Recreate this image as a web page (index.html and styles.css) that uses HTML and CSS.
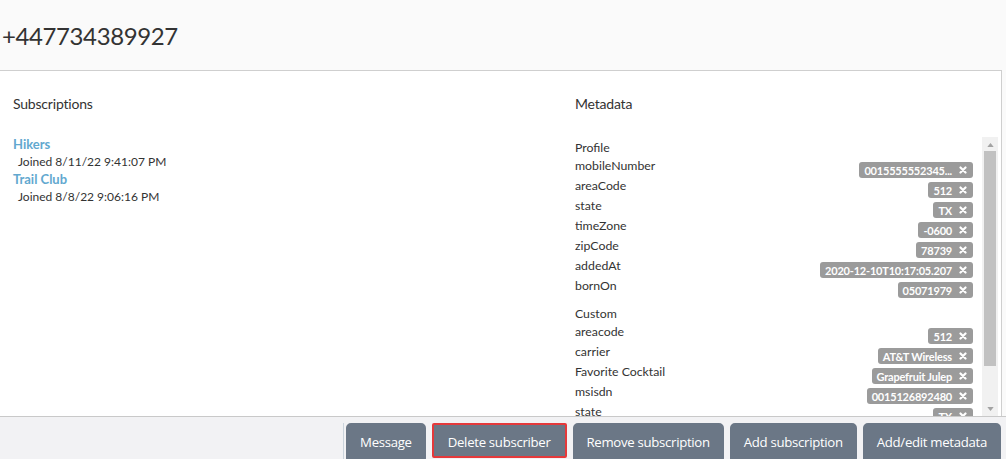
FILE: index.html
```html
<!DOCTYPE html>
<html>
<head>
<meta charset="utf-8">
<link rel="stylesheet" href="styles.css">
</head>
<body>
<div class="header"><h1 class="phone">+447734389927</h1></div>
<div class="panel">
  <section class="subs">
    <h2 class="heading">Subscriptions</h2>
    <ul class="sub-list">
      <li><a class="sub-name">Hikers</a><div class="joined">Joined 8/11/22 9:41:07 PM</div></li>
      <li><a class="sub-name">Trail Club</a><div class="joined">Joined 8/8/22 9:06:16 PM</div></li>
    </ul>
  </section>
  <section class="meta">
    <h2 class="heading">Metadata</h2>
    <div class="meta-scroll">
      <div class="meta-list">
        <div class="group-title">Profile</div>
        <div class="row"><span class="key">mobileNumber</span><span class="badge">0015555552345...<svg class="x" viewBox="0 0 8 8"><path d="M1.5 1.5L6.5 6.5M6.5 1.5L1.5 6.5"/></svg></span></div>
        <div class="row"><span class="key">areaCode</span><span class="badge">512<svg class="x" viewBox="0 0 8 8"><path d="M1.5 1.5L6.5 6.5M6.5 1.5L1.5 6.5"/></svg></span></div>
        <div class="row"><span class="key">state</span><span class="badge">TX<svg class="x" viewBox="0 0 8 8"><path d="M1.5 1.5L6.5 6.5M6.5 1.5L1.5 6.5"/></svg></span></div>
        <div class="row"><span class="key">timeZone</span><span class="badge">-0600<svg class="x" viewBox="0 0 8 8"><path d="M1.5 1.5L6.5 6.5M6.5 1.5L1.5 6.5"/></svg></span></div>
        <div class="row"><span class="key">zipCode</span><span class="badge">78739<svg class="x" viewBox="0 0 8 8"><path d="M1.5 1.5L6.5 6.5M6.5 1.5L1.5 6.5"/></svg></span></div>
        <div class="row"><span class="key">addedAt</span><span class="badge">2020-12-10T10:17:05.207<svg class="x" viewBox="0 0 8 8"><path d="M1.5 1.5L6.5 6.5M6.5 1.5L1.5 6.5"/></svg></span></div>
        <div class="row"><span class="key">bornOn</span><span class="badge">05071979<svg class="x" viewBox="0 0 8 8"><path d="M1.5 1.5L6.5 6.5M6.5 1.5L1.5 6.5"/></svg></span></div>
        <div class="group-title group-gap">Custom</div>
        <div class="row"><span class="key">areacode</span><span class="badge">512<svg class="x" viewBox="0 0 8 8"><path d="M1.5 1.5L6.5 6.5M6.5 1.5L1.5 6.5"/></svg></span></div>
        <div class="row"><span class="key">carrier</span><span class="badge">AT&amp;T Wireless<svg class="x" viewBox="0 0 8 8"><path d="M1.5 1.5L6.5 6.5M6.5 1.5L1.5 6.5"/></svg></span></div>
        <div class="row"><span class="key">Favorite Cocktail</span><span class="badge">Grapefruit Julep<svg class="x" viewBox="0 0 8 8"><path d="M1.5 1.5L6.5 6.5M6.5 1.5L1.5 6.5"/></svg></span></div>
        <div class="row"><span class="key">msisdn</span><span class="badge">0015126892480<svg class="x" viewBox="0 0 8 8"><path d="M1.5 1.5L6.5 6.5M6.5 1.5L1.5 6.5"/></svg></span></div>
        <div class="row"><span class="key">state</span><span class="badge">TX<svg class="x" viewBox="0 0 8 8"><path d="M1.5 1.5L6.5 6.5M6.5 1.5L1.5 6.5"/></svg></span></div>
      </div>
      <div class="scrollbar">
        <svg class="arrow" viewBox="0 0 8 5"><path d="M0 5L4 0L8 5Z"/></svg>
        <div class="thumb-track"><div class="thumb"></div></div>
        <svg class="arrow" viewBox="0 0 8 5"><path d="M0 0L4 5L8 0Z"/></svg>
      </div>
    </div>
  </section>
</div>
<div class="toolbar">
  <div class="actions">
    <button class="btn">Message</button>
    <button class="btn btn-focus">Delete subscriber</button>
    <button class="btn">Remove subscription</button>
    <button class="btn">Add subscription</button>
    <button class="btn">Add/edit metadata</button>
  </div>
</div>
</body>
</html>
```
FILE: styles.css
```css
* { box-sizing: border-box; }
html, body { margin: 0; padding: 0; }
body {
  width: 1006px;
  height: 459px;
  overflow: hidden;
  background: #fafafa;
  font-family: "Lato", "Liberation Sans", sans-serif;
  color: #333;
}
.header {
  height: 70px;
  padding: 21px 0 0 2px;
}
.phone {
  margin: 0;
  font-size: 24px;
  font-weight: 400;
  line-height: 30px;
  color: #333;
  letter-spacing: -0.4px;
}
.panel {
  width: 1002px;
  height: 346px;
  background: #fff;
  border-top: 1px solid #cfcfcf;
  border-right: 1px solid #cfcfcf;
  display: grid;
  grid-template-columns: 575px 1fr;
  overflow: hidden;
}
.heading {
  margin: 0;
  font-size: 14px;
  font-weight: 400;
  line-height: 18px;
  color: #333;
  letter-spacing: -0.2px;
}
.subs { padding: 24px 13px 0; }
.sub-list { list-style: none; margin: 22px 0 0; padding: 0; }
.sub-name {
  display: block;
  font-size: 13px;
  font-weight: 700;
  color: #62a8cf;
  line-height: 19px;
}
.joined {
  font-size: 12px;
  line-height: 16px;
  padding-left: 5px;
  color: #333;
}
.meta { padding: 24px 0 0 0; }
.meta-scroll {
  display: flex;
  margin-top: 24px;
  height: 279px;
  overflow: hidden;
}
.meta-list { flex: 1; padding: 0 9px 0 0; }
.group-title {
  font-size: 12.3px;
  line-height: 20px;
  height: 20px;
  padding-top: 1px;
}
.group-gap { margin-top: 6px; }
.row {
  display: flex;
  justify-content: space-between;
  height: 20px;
}
.key {
  font-size: 12.3px;
  line-height: 18px;
  align-self: flex-start;
}
.badge {
  align-self: flex-end;
  margin-bottom: -1px;
  display: inline-flex;
  align-items: center;
  gap: 7px;
  height: 16px;
  padding: 0 6px 0 5px;
  background: #9b9b9b;
  color: #fff;
  font-size: 11px;
  font-weight: 700;
  border-radius: 3px;
  letter-spacing: -0.2px;
}
.x { width: 8px; height: 8px; }
.x path { stroke: #fff; stroke-width: 2.2; stroke-linecap: round; fill: none; }
.scrollbar {
  width: 16px;
  margin-right: 3px;
  background: #f1f1f1;
  display: flex;
  flex-direction: column;
  align-items: center;
  padding: 6px 0 5px;
}
.arrow { width: 7px; height: 4px; fill: #a3a3a3; }
.thumb-track { flex: 1; width: 100%; padding: 4px 2px 0; }
.thumb { height: 215px; background: #c1c1c1; }
.toolbar {
  height: 43px;
  background: #f2f2f4;
  border-top: 1px solid #c9c9c9;
  display: flex;
  justify-content: flex-end;
  padding: 6px 5px 0 0;
}
.actions {
  display: flex;
  gap: 6px;
  align-items: flex-start;
  border-left: 1px solid #cbd4dc;
  padding-left: 2px;
}
.btn {
  font-family: "Open Sans", sans-serif;
  font-size: 13.2px;
  line-height: 20px;
  color: #fff;
  background: #6b7786;
  border: 2px solid #6b7786;
  border-radius: 5px;
  padding: 7px 12px 9px;
  height: 40px;
  letter-spacing: -0.3px;
}
.btn-focus {
  border-color: #e5393b;
  border-radius: 2px;
  height: 35px;
  padding: 7px 14px 6px;
}
```
